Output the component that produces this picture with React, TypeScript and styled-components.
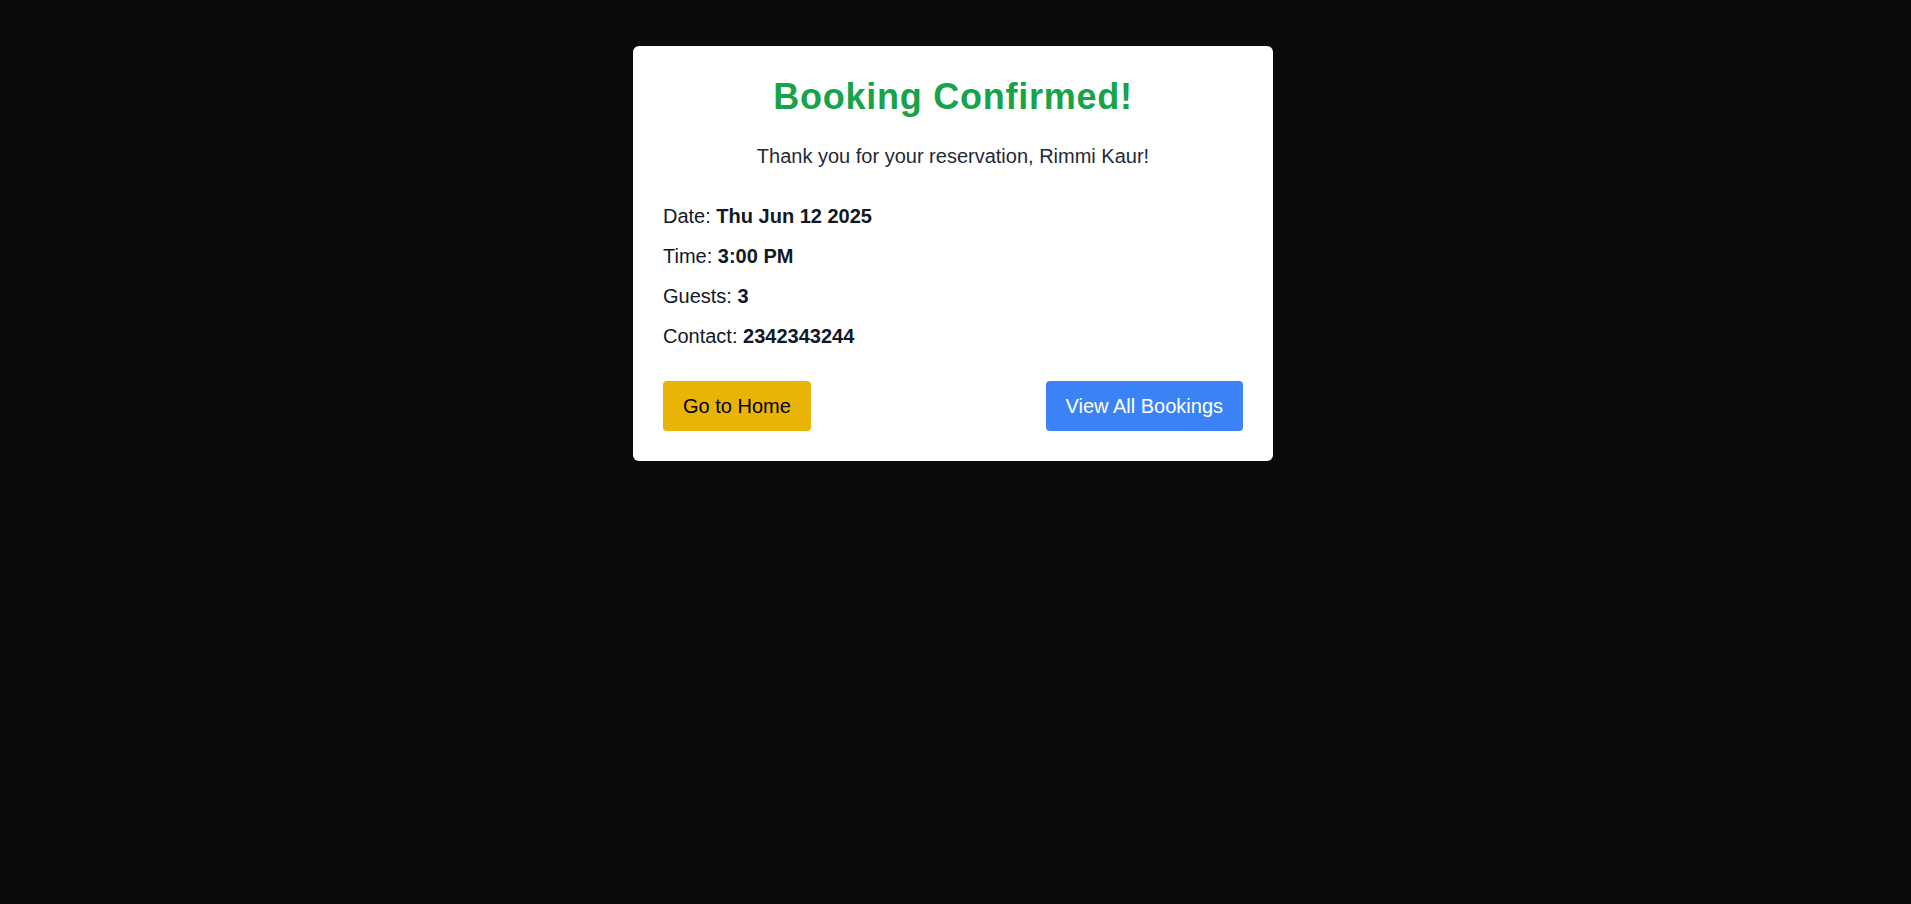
import React from "react";
import styled, { createGlobalStyle } from "styled-components";

const GlobalStyle = createGlobalStyle`
  html, body {
    margin: 0;
    padding: 0;
    background: #0a0a0a;
    font-family: "Liberation Sans", Arial, sans-serif;
  }
  * { box-sizing: border-box; }
`;

const Page = styled.div`
  min-height: 904px;
  display: flex;
  justify-content: center;
  align-items: flex-start;
  padding: 46px 5px 0 0;
`;

const Card = styled.div`
  width: 640px;
  background: #ffffff;
  border-radius: 6px;
  padding: 30px;
  display: flex;
  flex-direction: column;
`;

const Title = styled.h1`
  margin: 0;
  font-size: 36px;
  line-height: 42px;
  font-weight: 700;
  color: #16a34a;
  text-align: center;
  letter-spacing: 0.75px;
`;

const Subtitle = styled.p`
  margin: 24px 0 0;
  font-size: 20px;
  line-height: 28px;
  color: #1f2937;
  text-align: center;
`;

const Details = styled.div`
  margin-top: 32px;
  display: flex;
  flex-direction: column;
  gap: 12px;
`;

const Line = styled.p`
  margin: 0;
  font-size: 20px;
  line-height: 28px;
  color: #111827;
  b { font-weight: 700; }
`;

const Actions = styled.div`
  margin-top: 31px;
  display: flex;
  justify-content: space-between;
  align-items: center;
`;

const Button = styled.button<{ $variant: "yellow" | "blue" }>`
  font-family: "Liberation Sans", Arial, sans-serif;
  font-size: 20px;
  line-height: 30px;
  padding: 10px 20px;
  border: none;
  border-radius: 4px;
  cursor: pointer;
  background: ${(p) => (p.$variant === "yellow" ? "#eab308" : "#3b82f6")};
  color: ${(p) => (p.$variant === "yellow" ? "#000000" : "#ffffff")};
`;

export default function App() {
  return (
    <>
      <GlobalStyle />
      <Page>
        <Card>
          <Title>Booking Confirmed!</Title>
          <Subtitle>Thank you for your reservation, Rimmi Kaur!</Subtitle>
          <Details>
            <Line>
              Date: <b>Thu Jun 12 2025</b>
            </Line>
            <Line>
              Time: <b>3:00 PM</b>
            </Line>
            <Line>
              Guests: <b>3</b>
            </Line>
            <Line>
              Contact: <b>2342343244</b>
            </Line>
          </Details>
          <Actions>
            <Button $variant="yellow">Go to Home</Button>
            <Button $variant="blue">View All Bookings</Button>
          </Actions>
        </Card>
      </Page>
    </>
  );
}
